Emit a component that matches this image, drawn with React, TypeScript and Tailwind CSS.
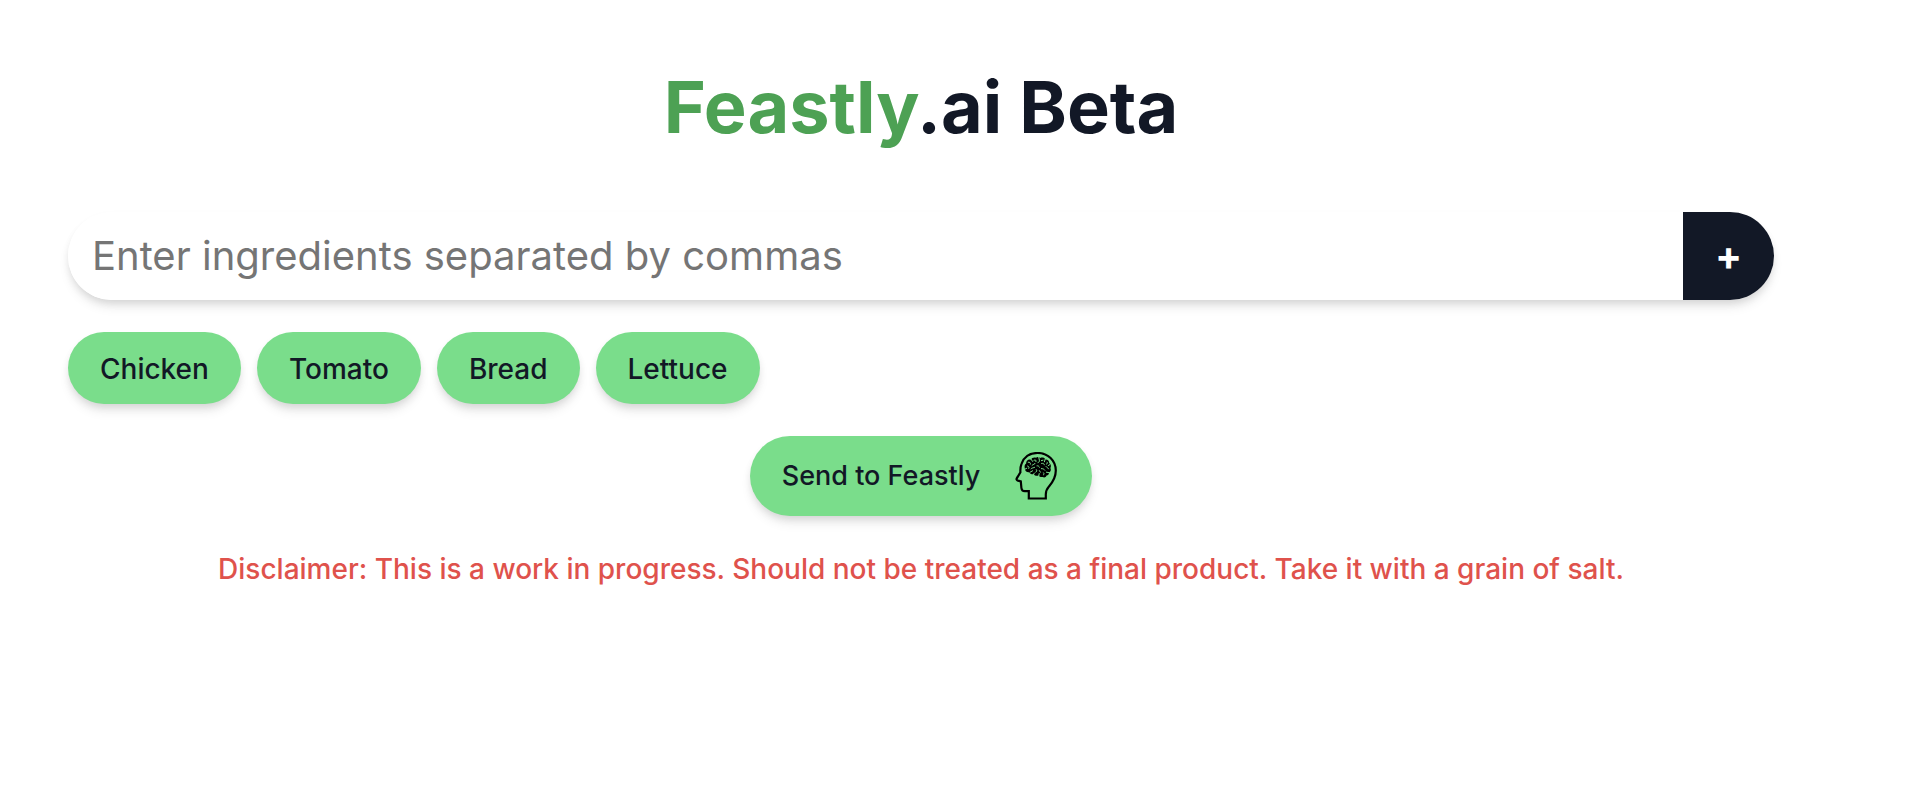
import { useState, type FormEvent } from "react";

const SHADOW = "shadow-[0_8px_12px_-2px_rgba(0,0,0,0.1),0_4px_8px_-2px_rgba(0,0,0,0.1)]";

function BrainIcon() {
  return (
    <svg viewBox="0 0 48 48" className="size-12" fill="none" stroke="#000" aria-hidden="true">
      <path
        strokeWidth="2.2"
        d="M16.8 46.5V39.2H12.8C10.4 39.2 9.6 38 9.4 36L8.8 29.4L6 28.6C4.5 28.1 4.2 27.3 4.9 26.1L8.4 20.2C8.2 16.6 8.5 14.2 9.5 11.8C12 5 18 1 25.5 1C36 1 43.8 8.6 43.8 18.6C43.8 26 40.6 30.4 37 34.4C34.6 37.2 33.8 39.4 33.8 42.4V46.5Z"
      />
      <path
        fill="#000"
        stroke="none"
        d="M12.8 16.2C12.2 14.2 12.8 12.4 14.2 11.6C13.8 8.8 16.4 6.8 19 7.8C19.8 5.8 22 5 24 5.8C25.2 4.8 27 4.8 28.2 6C30.2 5 32.6 5.6 33.4 7.4C35.6 7.2 37.4 8.8 37.2 11C39 12 39.4 14.4 38.4 16C39.4 17.8 38.6 19.8 37 20.4C37 22 36 23.4 34.6 23.6C34 25.4 32.2 26 30.6 25C28.6 25.2 27.4 24.4 26.8 23.4C25 24.2 22.8 23.8 21.8 22.2C19.8 22.6 18 21.8 17.4 20.2C15.2 20.8 12.8 19.2 12.8 16.2Z"
      />
      <path
        stroke="#7add8b"
        strokeWidth="1"
        strokeLinecap="round"
        strokeLinejoin="round"
        d="M12.6 17.4L14.8 16.2M15.6 14C17 14.2 17.4 15.4 16.8 16.4M16.2 10.2C17.8 9.8 18.8 10.8 18.4 12.2M19.2 7.4L20.6 9.4M22 8.2C23.6 7.4 24.6 8.4 24 9.6M20 13.4C21 12.2 22.8 12.6 23 11.4M26.8 5.4L27.4 8.2C27.8 9.6 26.8 10.4 26 10.6M29.4 8.6L31 8.2M33.2 7L32.4 9.8M29.6 11.4C31 11.2 32.2 11.6 32.4 12.8M35.2 10.2C35.8 11 35.2 12 34.4 12.2M37.8 12.6L36.2 13.6M25 13.8C26.2 13.6 27 14.2 27.4 15.2M34 14.6C34.6 15.6 36.2 15.6 36.6 16.8M19 16.8C20 15.6 21.6 16 22.6 15.4M29.4 16.6C31 16.6 32 17 32.8 18.2M24.4 17.6C25.2 18.4 24.8 19.8 23.8 20.2M18.4 20L20.6 18.8M27.4 18.6L28.4 20.2M34.4 20.2L36.8 20.6M31.6 20.8C32.4 21.6 32 22.6 31.4 23M26.8 23.8L27.2 21.6M21.6 22.6L22.2 21.2"
      />
    </svg>
  );
}

export default function App() {
  const [ingredients, setIngredients] = useState(["Chicken", "Tomato", "Bread", "Lettuce"]);
  const [draft, setDraft] = useState("");

  const addIngredients = (event: FormEvent) => {
    event.preventDefault();
    const added = draft.split(",").map((item) => item.trim()).filter(Boolean);
    setIngredients([...ingredients, ...added]);
    setDraft("");
  };

  return (
    <main className="flex min-h-screen flex-col bg-white pt-[71px] pr-[148px] pb-16 pl-[68px] font-['Inter',sans-serif] text-[#121826]">
      <h1 className="text-center text-[72px] leading-[72px] font-bold">
        <span className="text-[#4da154]">Feastly</span>.ai Beta
      </h1>

      <form onSubmit={addIngredients} className={`mt-[69px] flex h-[88px] rounded-full ${SHADOW}`}>
        <input
          type="text"
          aria-label="Ingredients"
          value={draft}
          onChange={(event) => setDraft(event.target.value)}
          placeholder="Enter ingredients separated by commas"
          className="min-w-0 flex-1 rounded-l-full bg-white px-6 text-[40px] outline-none placeholder:text-[#757575]"
        />
        <button type="submit" className="w-[91px] rounded-r-full bg-[#121826] text-[40px] font-bold text-white">
          +
        </button>
      </form>

      <ul className="mt-8 flex flex-wrap gap-4">
        {ingredients.map((name, index) => (
          <li key={index} className={`rounded-full bg-[#7add8b] px-8 pt-[17px] pb-[15px] text-[28px] leading-10 font-medium ${SHADOW}`}>
            {name}
          </li>
        ))}
      </ul>

      <button
        type="button"
        className={`mt-8 flex items-center gap-8 self-center rounded-full bg-[#7add8b] px-8 py-4 text-[27px] leading-10 font-medium ${SHADOW}`}
      >
        Send to Feastly
        <BrainIcon />
      </button>

      <p className="mt-8 text-center text-[28px] leading-[42px] font-medium text-[#df524c]">
        Disclaimer: This is a work in progress. Should not be treated as a final product. Take it with a grain of salt.
      </p>
    </main>
  );
}
